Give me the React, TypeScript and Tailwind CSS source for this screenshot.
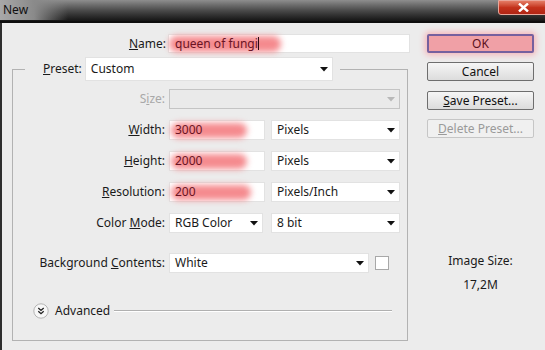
import React from "react";

const font = { fontFamily: '"Segoe UI", "Noto Sans", "Open Sans", sans-serif' };

function Arrow({ dim = false }: { dim?: boolean }) {
  return (
    <svg width="8" height="5" viewBox="0 0 8 5" className="shrink-0">
      <path d="M0 0 L8 0 L4 4.5 Z" fill={dim ? "#b8b8b8" : "#111"} />
    </svg>
  );
}

function Select({ value, w, disabled = false }: { value: string; w: string; disabled?: boolean }) {
  return (
    <div
      className={`${w} h-[20px] flex items-center justify-between pl-[5px] pr-[4px] border ${
        disabled ? "bg-[#eaeaea] border-[#c4c4c4]" : "bg-white border-[#e2e2e2]"
      }`}
    >
      <span className="text-[#1a1a1a] leading-none">{value}</span>
      <Arrow dim={disabled} />
    </div>
  );
}

function Blurred({ text, blob }: { text: string; blob: string }) {
  return (
    <div className="relative w-[96px] h-[20px] bg-white border border-[#e2e2e2] flex items-center pl-[5px]">
      <span className={`absolute left-[1px] top-[2px] h-[15px] ${blob} bg-[#f58a8e] rounded-full blur-[3px]`} />
      <span className="relative text-[#6a1424] leading-none">{text}</span>
    </div>
  );
}

function Label({ children }: { children: React.ReactNode }) {
  return <div className="w-[156px] pr-[4px] text-right text-[#1a1a1a] shrink-0">{children}</div>;
}

function Btn({ children, disabled = false }: { children: React.ReactNode; disabled?: boolean }) {
  return (
    <div
      className={`w-[107px] h-[19px] flex items-center justify-center rounded-[2px] border ${
        disabled
          ? "border-[#c6c6c6] bg-[#f0f0f0] text-[#9a9a9a]"
          : "border-[#6e6e6e] bg-gradient-to-b from-[#f6f6f6] to-[#dcdcdc] text-[#111]"
      }`}
    >
      {children}
    </div>
  );
}

export default function App() {
  return (
    <div className="w-[545px] h-[350px] bg-[#ececec] overflow-hidden text-[12px] leading-[16px]" style={font}>
      <div className="h-[23px] flex items-start justify-between bg-gradient-to-b from-[#8e8e8e] via-[#4a4a4a] to-[#151515] border-b-2 border-[#0e0e0e]">
        <div className="h-[20px] px-[3px] flex items-center text-[#101010] bg-gradient-to-r from-[#a8a8a8] via-[#8a8a8a] to-transparent pr-[40px]">
          New
        </div>
        <div className="w-[50px] h-[15px] -mr-[3px] flex items-center justify-center rounded-bl-[3px] border border-[#e9a79b] bg-gradient-to-b from-[#e47a64] via-[#c4321c] to-[#b02414]">
          <svg width="11" height="9" viewBox="0 0 11 9">
            <path d="M1 0.5 L10 8.5 M10 0.5 L1 8.5" stroke="#fff" strokeWidth="2.4" />
          </svg>
        </div>
      </div>

      <div className="flex h-[327px] border-l-2 border-[#2e2e2e]">
        <div className="w-[410px] pt-[11px] shrink-0">
          <div className="flex items-center h-[19px]">
            <div className="w-[164px] text-right text-[#1a1a1a] shrink-0">
              <u>N</u>ame:
            </div>
            <div className="relative ml-[2px] w-[242px] h-[19px] bg-white border border-[#e2e2e2] flex items-center pl-[6px]">
              <span className="absolute left-[0px] top-[1px] w-[112px] h-[16px] bg-[#f58a8e] rounded-full blur-[3px]" />
              <span className="relative text-[#6a1424] leading-none">queen of fungi</span>
              <span className="relative w-px h-[13px] bg-[#2a0a10]" />
            </div>
          </div>

          <fieldset className="ml-[10px] mt-[4px] w-[396px] border border-[#b2b2b2] pb-[21px]">
            <legend className="ml-[12px] pl-[18px] pr-[7px] flex items-center bg-[#ececec]">
              <span className="text-[#1a1a1a] mr-[3px]">
                <u>P</u>reset:
              </span>
              <Select value="Custom" w="w-[248px] h-[24px]" />
            </legend>

            <div className="mt-[8px] flex items-center">
              <Label>
                <span className="text-[#a8a8a8]">
                  S<u>i</u>ze:
                </span>
              </Label>
              <Select value="" w="w-[231px]" disabled />
            </div>

            <div className="mt-[11px] flex items-center">
              <Label>
                <u>W</u>idth:
              </Label>
              <Blurred text="3000" blob="w-[76px]" />
              <div className="ml-[6px]">
                <Select value="Pixels" w="w-[129px]" />
              </div>
            </div>

            <div className="mt-[11px] flex items-center">
              <Label>
                <u>H</u>eight:
              </Label>
              <Blurred text="2000" blob="w-[76px]" />
              <div className="ml-[6px]">
                <Select value="Pixels" w="w-[129px]" />
              </div>
            </div>

            <div className="mt-[11px] flex items-center">
              <Label>
                <u>R</u>esolution:
              </Label>
              <Blurred text="200" blob="w-[80px]" />
              <div className="ml-[6px]">
                <Select value="Pixels/Inch" w="w-[129px]" />
              </div>
            </div>

            <div className="mt-[11px] flex items-center">
              <Label>
                Color <u>M</u>ode:
              </Label>
              <Select value="RGB Color" w="w-[94px]" />
              <div className="ml-[8px]">
                <Select value="8 bit" w="w-[129px]" />
              </div>
            </div>

            <div className="mt-[20px] flex items-center">
              <Label>
                Background <u>C</u>ontents:
              </Label>
              <Select value="White" w="w-[200px]" />
              <div className="ml-[6px] w-[14px] h-[14px] bg-white border border-[#a8a8a8]" />
            </div>

            <div className="mt-[30px] flex items-center pl-[20px]">
              <svg width="16" height="16" viewBox="0 0 16 16" className="shrink-0">
                <circle cx="8" cy="8" r="7.2" fill="#f7f7f7" stroke="#b4b4b4" />
                <path d="M5.3 5 L8 7.4 L10.7 5 M5.3 8.3 L8 10.7 L10.7 8.3" stroke="#222" strokeWidth="1.3" fill="none" />
              </svg>
              <span className="ml-[6px] text-[#1a1a1a]">Advanced</span>
              <div className="ml-[4px] w-[278px] border-t border-[#b0b0b0] border-b-white border-b" />
            </div>
          </fieldset>
        </div>

        <div className="pl-[15px] pt-[11px] w-[122px] flex flex-col items-start">
          <div className="w-[107px] h-[19px] flex items-center justify-center rounded-[2px] border-2 border-[#76609e] bg-[#f0a0a6] text-[#5a1020] shadow-[0_0_6px_2px_#f6b4b8]">
            OK
          </div>
          <div className="mt-[9px]">
            <Btn>Cancel</Btn>
          </div>
          <div className="mt-[10px]">
            <Btn>
              <u>S</u>ave Preset...
            </Btn>
          </div>
          <div className="mt-[9px]">
            <Btn disabled>
              <u>D</u>elete Preset...
            </Btn>
          </div>
          <div className="w-[107px] mt-[115px] text-center text-[#1a1a1a]">Image Size:</div>
          <div className="w-[107px] mt-[8px] text-center text-[#1a1a1a]">17,2M</div>
        </div>
      </div>
    </div>
  );
}
